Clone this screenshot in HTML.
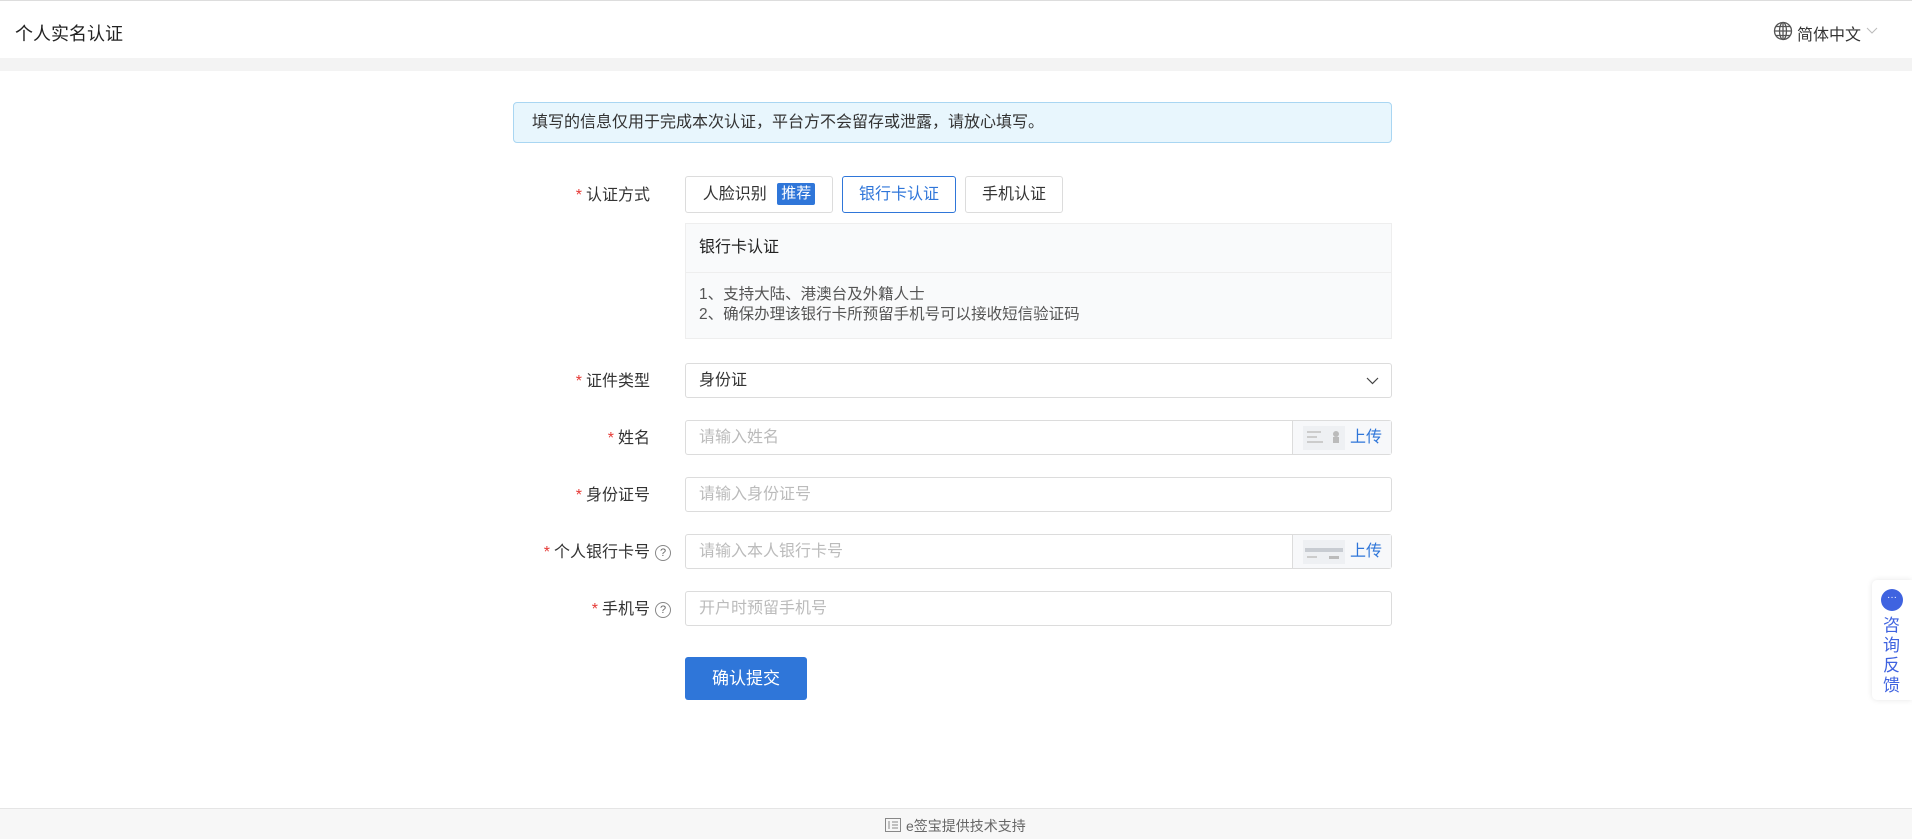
<!DOCTYPE html>
<html><head><meta charset="utf-8"><style>
*{box-sizing:border-box;margin:0;padding:0}
body{width:1912px;height:839px;position:relative;background:#fff;font-family:"Liberation Sans","Noto Sans CJK SC",sans-serif;color:#333;overflow:hidden;font-size:16px}
.abs{position:absolute}
.hdr{left:0;top:0;width:1912px;height:58px;border-top:1px solid #ddd;background:#fff}
.band{left:0;top:58px;width:1912px;height:13px;background:#f3f3f3}
.lab{position:absolute;right:1262px;font-size:16px;color:#333;white-space:nowrap;line-height:20px}
.lab b{color:#e53935;font-weight:normal;margin-right:4px}
.q{position:absolute;right:-21px;top:2px;width:16px;height:16px;border:1px solid #888;border-radius:50%;font-size:11px;line-height:14px;text-align:center;color:#666}
.inp{position:absolute;left:685px;width:707px;height:35px;border:1px solid #dcdcdc;border-radius:3px;font-size:16px;line-height:33px;padding-left:13px;color:#bbb}
.addon{position:absolute;right:0;top:0;width:99px;height:33px;border-left:1px solid #dcdcdc;background:#f7f8fa}
.addon span{position:absolute;right:9px;top:0;color:#2f76d9}
.btn{position:absolute;top:176px;height:37px;border:1px solid #dcdcdc;border-radius:3px;font-size:16px;line-height:35px;text-align:center;color:#333}
</style></head><body>
<div class="abs hdr"></div>
<div class="abs band"></div>
<div class="abs" style="left:15px;top:20px;font-size:18px;color:#222">个人实名认证</div>
<svg class="abs" style="left:1773px;top:21px" width="20" height="20" viewBox="0 0 20 20" fill="none" stroke="#555" stroke-width="1.3"><circle cx="10" cy="10" r="8.5"/><ellipse cx="10" cy="10" rx="3.5" ry="8.5"/><path d="M1.5 10h17M3 5.5h14M3 14.5h14M10 1.5v17"/></svg>
<div class="abs" style="left:1797px;top:21px;font-size:16px;color:#333">简体中文</div>
<svg class="abs" style="left:1866px;top:27px" width="12" height="8" viewBox="0 0 12 8"><path d="M1 1l5 5 5-5" stroke="#bbb" fill="none"/></svg>

<div class="abs" style="left:513px;top:102px;width:879px;height:41px;background:#e8f6fd;border:1px solid #a9d6f2;border-radius:4px;font-size:16px;line-height:39px;padding-left:18px;color:#333">填写的信息仅用于完成本次认证，平台方不会留存或泄露，请放心填写。</div>

<div class="lab" style="top:186px"><b>*</b>认证方式</div>
<div class="btn" style="left:685px;width:148px">人脸识别 <span style="display:inline-block;background:#2f76d9;color:#fff;font-size:15px;line-height:22px;padding:0 4px;border-radius:2px;margin-left:6px;vertical-align:1px">推荐</span></div>
<div class="btn" style="left:842px;width:114px;border-color:#2f76d9;color:#2f76d9">银行卡认证</div>
<div class="btn" style="left:965px;width:98px">手机认证</div>

<div class="abs" style="left:685px;top:223px;width:707px;height:116px;background:#f9fafb;border:1px solid #eee">
<div style="height:49px;border-bottom:1px solid #eee;line-height:48px;padding-left:13px;color:#222">银行卡认证</div>
<div style="padding:12px 0 0 13px;line-height:20px;font-size:15.5px;color:#555">1、支持大陆、港澳台及外籍人士<br>2、确保办理该银行卡所预留手机号可以接收短信验证码</div>
</div>

<div class="lab" style="top:372px"><b>*</b>证件类型</div>
<div class="inp" style="top:363px;color:#333">身份证<svg style="position:absolute;right:12px;top:13px" width="13" height="8" viewBox="0 0 13 8"><path d="M1 1l5.5 5.5L12 1" stroke="#444" fill="none" stroke-width="1.2"/></svg></div>

<div class="lab" style="top:429px"><b>*</b>姓名</div>
<div class="inp" style="top:420px">请输入姓名<div class="addon"><svg style="position:absolute;left:10px;top:5px" width="42" height="24"><rect width="42" height="24" fill="#eef0f3"/><rect x="4" y="5" width="14" height="2" fill="#ccc"/><rect x="4" y="10" width="10" height="2" fill="#ccc"/><rect x="4" y="15" width="16" height="2" fill="#ccc"/><circle cx="33" cy="8" r="3" fill="#bbb"/><rect x="30" y="11" width="6" height="6" fill="#bbb"/></svg><span>上传</span></div></div>

<div class="lab" style="top:486px"><b>*</b>身份证号</div>
<div class="inp" style="top:477px">请输入身份证号</div>

<div class="lab" style="top:543px"><b>*</b>个人银行卡号<span class="q">?</span></div>
<div class="inp" style="top:534px">请输入本人银行卡号<div class="addon"><svg style="position:absolute;left:10px;top:5px" width="42" height="24"><rect width="42" height="24" fill="#eef0f3"/><rect x="2" y="8" width="38" height="4" fill="#c8ccd2"/><rect x="4" y="16" width="10" height="2" fill="#ccc"/><rect x="26" y="16" width="10" height="3" fill="#bbb"/></svg><span>上传</span></div></div>

<div class="lab" style="top:600px"><b>*</b>手机号<span class="q">?</span></div>
<div class="inp" style="top:591px">开户时预留手机号</div>

<div class="abs" style="left:685px;top:657px;width:122px;height:43px;background:#2f76d9;border-radius:3px;color:#fff;font-size:17px;line-height:43px;text-align:center">确认提交</div>

<div class="abs" style="left:1872px;top:580px;width:40px;height:120px;background:#fff;border-radius:5px 0 0 5px;box-shadow:0 0 6px rgba(0,0,0,.1)">
<div style="position:absolute;left:9px;top:9px;width:22px;height:22px;border-radius:50%;background:#3f63e0;color:#fff;font-size:10px;text-align:center;line-height:18px">···</div>
<div style="position:absolute;left:11px;top:36px;width:18px;font-size:17px;line-height:20px;color:#3f63e0">咨询反馈</div>
</div>

<div class="abs" style="left:0;top:808px;width:1912px;height:31px;background:#f7f7f7;border-top:1px solid #e5e5e5"></div>
<svg class="abs" style="left:885px;top:818px" width="16" height="14"><rect x=".5" y=".5" width="15" height="13" fill="none" stroke="#888"/><path d="M4 3v8M7 4h6M7 7h6M7 10h6" stroke="#888"/></svg>
<div class="abs" style="left:906px;top:816px;font-size:14px;color:#666">e签宝提供技术支持</div>
</body></html>
